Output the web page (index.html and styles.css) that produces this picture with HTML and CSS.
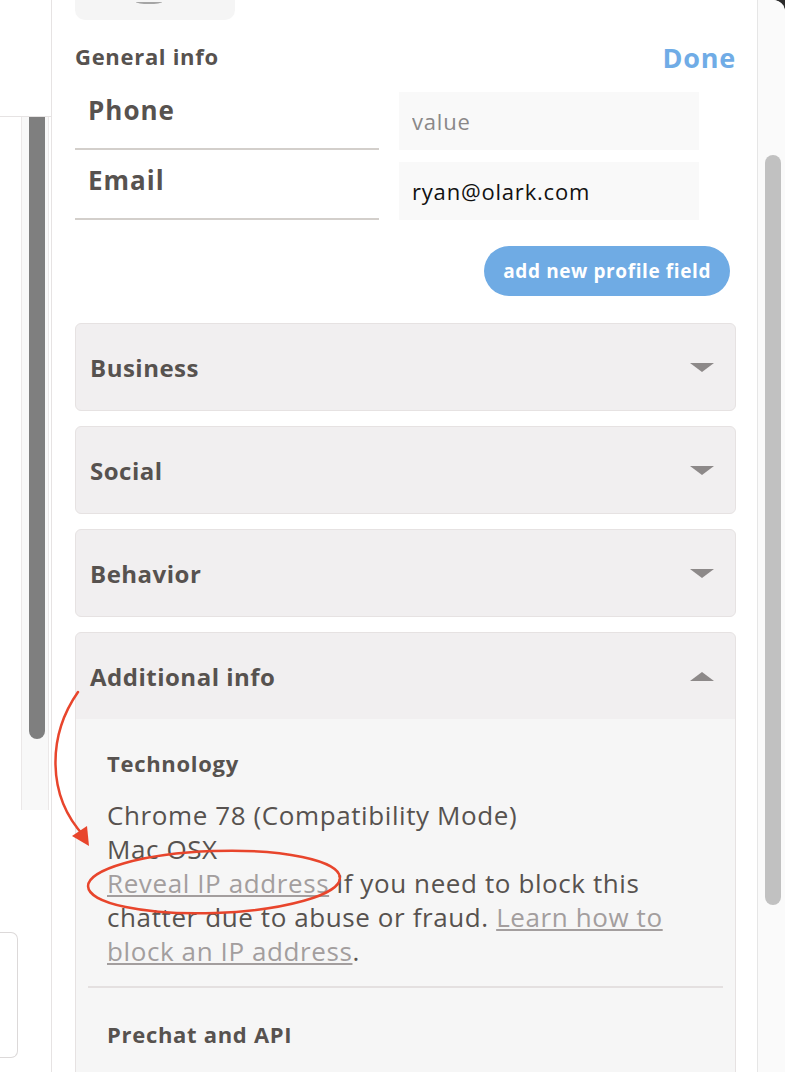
FILE: index.html
```html
<!DOCTYPE html>
<html lang="en">
  <head>
    <meta charset="UTF-8" />
    <meta name="viewport" content="width=device-width, initial-scale=1.0" />
    <title>Visitor profile</title>
    <link rel="stylesheet" href="styles.css">
  </head>
  <body>
    <div class="app">
      <aside class="side">
        <div class="side-top"></div>
        <div class="side-scroll"><div class="side-thumb"></div></div>
        <div class="side-card"></div>
      </aside>

      <main class="panel">
        <div class="avatar"><span class="avatar-arc"></span></div>

        <div class="panel-head">
          <h2>General info</h2>
          <a class="done" href="#">Done</a>
        </div>

        <div class="field">
          <label>Phone</label>
          <input type="text" placeholder="value" />
        </div>
        <div class="field">
          <label>Email</label>
          <input type="text" value="ryan@olark.com" />
        </div>

        <div class="actions">
          <button type="button">add new profile field</button>
        </div>

        <section class="card">
          <header>Business <span class="caret"></span></header>
        </section>
        <section class="card">
          <header>Social <span class="caret"></span></header>
        </section>
        <section class="card">
          <header>Behavior <span class="caret"></span></header>
        </section>
        <section class="card open">
          <header>Additional info <span class="caret up"></span></header>
          <div class="card-body">
            <h3>Technology</h3>
            <p>
              Chrome 78 (Compatibility Mode)<br />
              Mac OSX<br />
              <a href="#">Reveal IP address</a> if you need to block this
              chatter due to abuse or fraud.
              <a href="#">Learn how to block an IP address</a>.
            </p>
            <hr />
            <h3>Prechat and API</h3>
          </div>
        </section>
      </main>

      <div class="scroll"><div class="scroll-thumb"></div></div>

      <!-- red annotation drawn over the screenshot -->
      <svg class="annot" width="785" height="1072" viewBox="0 0 785 1072">
        <path d="M78 692 C 48 735, 46 795, 84 836" fill="none" stroke="#e8452c" stroke-width="2.5" stroke-linecap="round" />
        <polygon points="89,846 72,836 87,826" fill="#e8452c" />
        <ellipse cx="214" cy="882" rx="126" ry="31" fill="none" stroke="#e8452c" stroke-width="2.5" transform="rotate(-2 214 882)" />
      </svg>
    </div>
  </body>
</html>
```

FILE: styles.css
```css
html {
  background: #2b2b2b;
}
body {
  margin: 0;
  font-family: "Open Sans", Lato, sans-serif;
  color: #57524f;
}
.app {
  position: relative;
  display: flex;
  width: 785px;
  height: 1072px;
  background: #fff;
  border-top-right-radius: 12px;
  overflow: hidden;
}

/* left column */
.side {
  width: 51px;
  flex-shrink: 0;
  border-right: 1px solid #e6e3e3;
}
.side-top {
  height: 116px;
  border-bottom: 1px solid #e6e3e3;
}
.side-scroll {
  margin-left: 21px;
  width: 26px;
  height: 693px;
  background: #f8f8f8;
  border-left: 1px solid #ebe8e8;
  border-right: 1px solid #ebe8e8;
}
.side-thumb {
  margin-left: 7px;
  width: 16px;
  height: 622px;
  background: #7f7f7f;
  border-radius: 0 0 8px 8px;
}
.side-card {
  margin-top: 122px;
  width: 17px;
  height: 124px;
  border: 1px solid #dcd9d9;
  border-left: none;
  border-radius: 0 7px 7px 0;
}

/* main panel */
.panel {
  flex: 1;
  padding: 0 21px 0 23px;
  border-right: 1px solid #e6e6e6;
}
.avatar {
  display: flex;
  justify-content: center;
  width: 160px;
  height: 20px;
  background: #f5f5f5;
  border-radius: 0 0 10px 10px;
}
.avatar-arc {
  margin-left: -12px;
  width: 26px;
  height: 2px;
  border-bottom: 2px solid #a5a5a5;
  border-radius: 0 0 50% 50%;
}
.panel-head {
  display: flex;
  justify-content: space-between;
  align-items: flex-end;
  margin-top: 22px;
  height: 32px;
}
.panel-head h2 {
  margin: 0 0 3px;
  font-size: 22px;
  font-weight: 700;
  letter-spacing: 0.7px;
  line-height: 30px;
}
.done {
  font-size: 27px;
  font-weight: 700;
  letter-spacing: 0.8px;
  color: #70ace6;
  text-decoration: none;
  line-height: 32px;
}

.field {
  display: flex;
  gap: 20px;
  height: 58px;
  margin-top: 12px;
}
.panel-head + .field {
  margin-top: 18px;
}
.field label {
  width: 304px;
  box-sizing: border-box;
  padding: 0 13px;
  border-bottom: 2px solid #d3cfcb;
  font-size: 26px;
  font-weight: 700;
  letter-spacing: 1px;
  line-height: 37px;
}
.field input {
  width: 300px;
  box-sizing: border-box;
  padding: 0 13px;
  border: none;
  background: #f9f9f9;
  font-family: "Open Sans", sans-serif;
  font-size: 22px;
  letter-spacing: 0.8px;
  color: #111;
}
.field input::placeholder {
  color: #8a8888;
}

.actions {
  display: flex;
  justify-content: flex-end;
  padding-right: 6px;
  margin-top: 26px;
}
.actions button {
  height: 50px;
  padding: 0 19px;
  border: none;
  border-radius: 25px;
  background: #6fabe4;
  color: #fff;
  font-family: "Open Sans", sans-serif;
  font-size: 19px;
  font-weight: 700;
  letter-spacing: 0.6px;
}

/* accordion */
.card {
  margin-top: 15px;
  border: 1px solid #e6e2e2;
  border-radius: 6px;
  background: #f1eff0;
  overflow: hidden;
}
.actions + .card {
  margin-top: 27px;
}
.card header {
  display: flex;
  align-items: center;
  justify-content: space-between;
  height: 86px;
  padding: 0 21px 0 14px;
  font-size: 24px;
  font-weight: 700;
  letter-spacing: 0.5px;
}
.caret {
  width: 0;
  height: 0;
  border-left: 12px solid transparent;
  border-right: 12px solid transparent;
  border-top: 9px solid #8d8989;
}
.caret.up {
  border-top: none;
  border-bottom: 9px solid #8d8989;
}
.card-body {
  padding: 28px 12px 40px;
  background: #f6f6f6;
}
.card-body h3 {
  margin: 0;
  padding: 0 19px;
  font-size: 22px;
  font-weight: 700;
  letter-spacing: 0.7px;
  line-height: 32px;
}
.card-body p {
  margin: 19px 0 0;
  padding: 0 19px;
  font-size: 26px;
  letter-spacing: 0.6px;
  line-height: 34px;
}
.card-body a {
  color: #a39e9e;
}
.card-body hr {
  margin: 18px 0 30px;
  border: none;
  border-top: 2px solid #e4e0e0;
}

/* right scrollbar */
.scroll {
  width: 27px;
  flex-shrink: 0;
  background: #fafafa;
}
.scroll-thumb {
  margin: 155px 0 0 7px;
  width: 16px;
  height: 750px;
  border-radius: 8px;
  background: #c1c1c1;
}

.annot {
  position: absolute;
  left: 0;
  top: 0;
  pointer-events: none;
}
```
